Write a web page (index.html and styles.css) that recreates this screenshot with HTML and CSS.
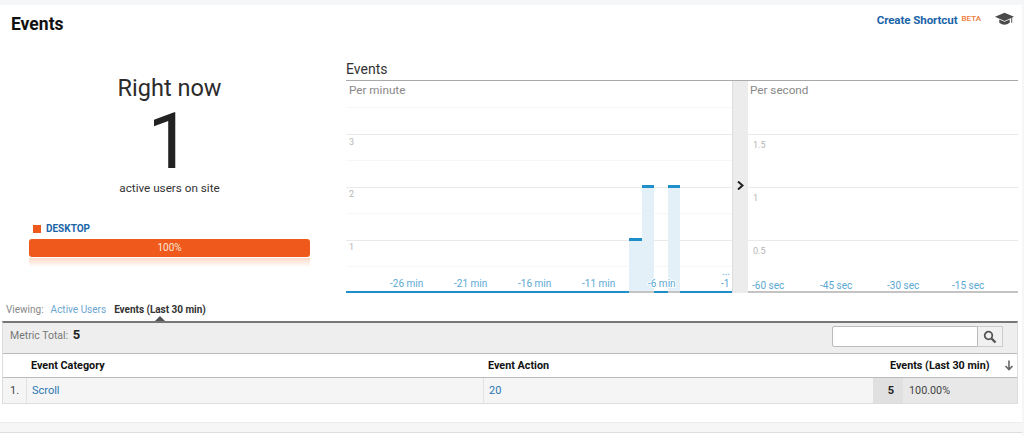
FILE: index.html
```html
<!DOCTYPE html>
<html>
<head>
    <meta charset="utf-8" />
    <title>Events - Real-Time</title>
    <link rel="stylesheet" href="styles.css">
</head>
<body>
<div class="page">
    <header class="head">
        <h1>Events</h1>
        <div class="shortcut">
            <a class="shortcut-link">Create Shortcut</a>
            <sup class="beta">BETA</sup>
            <svg class="cap" viewBox="0 0 20 14" width="19" height="14">
                <path d="M0 4.5 L10 0.5 L20 4.5 L10 9 Z" fill="#4a4a4a"/>
                <path d="M4.5 7.5 L10 10 L15.5 7.5 L15.5 11 Q10 15 4.5 11 Z" fill="#4a4a4a"/>
                <path d="M17.6 5.5 L17.6 11" stroke="#4a4a4a" stroke-width="1"/>
            </svg>
        </div>
    </header>

    <section class="overview">
        <div class="now">
            <div class="now-title">Right now</div>
            <div class="now-count">1</div>
            <div class="now-sub">active users on site</div>
            <div class="legend"><i class="legend-dot"></i>DESKTOP</div>
            <div class="bar">100%</div>
            <div class="bar-shine"></div>
        </div>
        <div class="charts">
            <h2>Events</h2>
            <div class="chart-row">
                <svg class="plot" width="386" height="212" viewBox="0 0 386 212">
                    <g class="grid-soft">
                        <path d="M0 26.5H386M0 79.5H386M0 132.5H386M0 185.5H386"/>
                    </g>
                    <g class="grid">
                        <path d="M0 53.5H386M0 106.5H386M0 159.5H386"/>
                    </g>
                    <text class="plot-title" x="3" y="13">Per minute</text>
                    <text class="tick-y" x="3" y="64">3</text>
                    <text class="tick-y" x="3" y="116">2</text>
                    <text class="tick-y" x="3" y="169">1</text>
                    <g class="col">
                        <rect x="283" y="158" width="13" height="52"/>
                        <rect x="296" y="105" width="12" height="105"/>
                        <rect x="322" y="105" width="12" height="105"/>
                    </g>
                    <g class="cap-line">
                        <rect x="283" y="157" width="13" height="3"/>
                        <rect x="296" y="104" width="12" height="3"/>
                        <rect x="322" y="104" width="12" height="3"/>
                    </g>
                    <rect class="axis" x="0" y="210" width="386" height="2"/>
                    <g class="cap-line">
                        <rect x="0" y="210" width="283" height="2"/>
                        <rect x="308" y="210" width="14" height="2"/>
                        <rect x="334" y="210" width="52" height="2"/>
                    </g>
                    <g class="tick-x">
                        <text x="44" y="206">-26 min</text>
                        <text x="108" y="206">-21 min</text>
                        <text x="172" y="206">-16 min</text>
                        <text x="236" y="206">-11 min</text>
                        <text x="302" y="206">-6 min</text>
                        <text x="375" y="206">-1</text>
                        <text x="376" y="194">...</text>
                    </g>
                </svg>
                <div class="divider">
                    <svg width="7" height="9" viewBox="0 0 7 9"><path d="M1 0.5 L5.5 4.5 L1 8.5" fill="none" stroke="#222" stroke-width="2"/></svg>
                </div>
                <svg class="plot" width="270" height="212" viewBox="0 0 270 212">
                    <g class="grid">
                        <path d="M0 53.5H270M0 106.5H270M0 159.5H270"/>
                    </g>
                    <text class="plot-title" x="2" y="13">Per second</text>
                    <text class="tick-y" x="5" y="67">1.5</text>
                    <text class="tick-y" x="5" y="120">1</text>
                    <text class="tick-y" x="5" y="173">0.5</text>
                    <rect class="axis" x="0" y="210" width="270" height="2"/>
                    <g class="tick-x">
                        <text x="4" y="208">-60 sec</text>
                        <text x="72" y="208">-45 sec</text>
                        <text x="139" y="208">-30 sec</text>
                        <text x="204" y="208">-15 sec</text>
                    </g>
                </svg>
            </div>
        </div>
    </section>

    <nav class="viewing">
        <span class="viewing-label">Viewing:</span>
        <a class="viewing-link">Active Users</a>
        <a class="viewing-current">Events (Last 30 min)</a>
    </nav>

    <section class="report">
        <div class="metric">
            <div class="metric-total">Metric Total: <b>5</b></div>
            <div class="search">
                <input class="search-input" type="text" />
                <button class="search-btn">
                    <svg width="14" height="14" viewBox="0 0 14 14"><circle cx="5.5" cy="5.5" r="3.8" fill="none" stroke="#555" stroke-width="1.8"/><path d="M8.5 8.5 L12.5 12.5" stroke="#555" stroke-width="2.4"/></svg>
                </button>
            </div>
        </div>
        <div class="row row-head">
            <div class="c-num"></div>
            <div class="c-cat">Event Category</div>
            <div class="c-act">Event Action</div>
            <div class="c-evt">Events (Last 30 min)
                <svg class="sort" width="10" height="11" viewBox="0 0 10 11"><path d="M5 0.5V9M1.5 6 L5 9.5 L8.5 6" fill="none" stroke="#666" stroke-width="1.6"/></svg>
            </div>
        </div>
        <div class="row row-data">
            <div class="c-num">1.</div>
            <div class="c-cat"><a>Scroll</a></div>
            <div class="c-act"><a>20</a></div>
            <div class="c-val">5</div>
            <div class="c-pct">100.00%</div>
        </div>
    </section>

    <div class="foot-strip"></div>
</div>
</body>
</html>
```

FILE: styles.css
```css
* {box-sizing: border-box;margin: 0;padding: 0;}
html, body {height: 100%;overflow: hidden;}
body {font-family: Roboto, "Liberation Sans", sans-serif;color: #222;background: #f5f6f8;}
a {color: #2a75b3;}

.page {width: 1022px;height: 436px;border-top: 5px solid #f5f6f8;background: #fff;}

.head {display: flex;justify-content: space-between;height: 38px;padding: 9px 8px 0 11px;}
h1 {font-size: 17.5px;line-height: 20px;font-weight: 700;color: #111;}
.shortcut {display: flex;align-items: flex-start;height: 20px;}
.shortcut-link {font-size: 11.6px;line-height: 15px;font-weight: 700;color: #1a64a8;letter-spacing: -0.1px;margin-top: -1px;}
.beta {font-size: 8px;line-height: 10px;color: #ee7a3a;font-weight: 500;margin: 0 0 0 4px;}
.cap {margin: -2px 0 0 14px;}

.overview {display: flex;height: 250px;}
.now {width: 346px;padding: 0 36px 0 29px;text-align: center;}
.now-title {font-size: 23.5px;line-height: 28px;margin-top: 31px;color: #2b2b2b;}
.now-count {font-size: 78px;line-height: 60px;font-weight: 400;margin-top: 10px;color: #222;}
.now-sub {font-size: 11.7px;line-height: 16px;margin-top: 8px;color: #333;}
.legend {display: flex;align-items: center;font-size: 10px;font-weight: 700;line-height: 12px;color: #1a64a8;margin: 27px 0 0 4px;}
.legend-dot {width: 8px;height: 8px;background: #ef5a1c;margin-right: 5px;}
.bar {height: 18px;margin-top: 4px;line-height: 18px;font-size: 10px;color: #fbe3d6;background: #ef5a1c;border-radius: 3px;}
.bar-shine {height: 9px;margin-top: 1px;background: linear-gradient(#fbd9c8, #fff);}

.charts {width: 672px;padding-top: 18px;}
h2 {font-size: 14px;line-height: 17px;font-weight: 400;color: #333;height: 20px;border-bottom: 1.5px solid #aaa;}
.chart-row {display: flex;}
.plot {display: block;}
.divider {width: 16px;height: 212px;background: #ececec;border-left: 1px solid #ddd;display: flex;justify-content: center;padding: 100px 1px 0 0;}

.grid path {stroke: #e9e9e9;fill: none;}
.grid-soft path {stroke: #f7f7f7;fill: none;}
.plot-title {font-size: 11.7px;fill: #888;}
.tick-y {font-size: 9px;fill: #b5b5b5;}
.tick-x {font-size: 10px;fill: #5aa8d4;stroke: #fff;stroke-width: 2px;paint-order: stroke;}
.col {fill: #e3f0f7;}
.cap-line {fill: #1e8fc8;}
.axis {fill: #c4c4c4;}

.viewing {display: flex;align-items: center;height: 15px;padding-left: 6px;margin-top: 9px;font-size: 10px;position: relative;}
.viewing-label {color: #888;}
.viewing-link {color: #6ba6d0;margin-left: 7px;}
.viewing-current {color: #333;font-weight: 700;margin-left: 8px;letter-spacing: -0.03px;}
.viewing-current::after {content: '';position: absolute;left: 155px;top: 14px;border: 5px solid transparent;border-top: 0;border-bottom-color: #555;}

.report {margin: 4px 4px 0 2px;border: 1px solid #ddd;border-top: 2px solid #777;}
.metric {display: flex;justify-content: space-between;height: 31px;background: #eee;border-bottom: 1px solid #bbb;padding: 3px 14px 0 7px;}
.metric-total {font-size: 10.5px;line-height: 16px;color: #777;padding-top: 1px;}
.metric-total b {font-size: 13px;color: #222;margin-left: 2px;}
.search {display: flex;height: 21px;}
.search-input {width: 146px;height: 21px;border: 1px solid #bbb;background: #fff;border-radius: 2px 0 0 2px;}
.search-btn {width: 25px;height: 21px;border: 1px solid #ccc;border-left: 0;background: #f1f1f1;display: flex;align-items: center;justify-content: center;}

.row {display: flex;font-size: 10.8px;}
.row-head {height: 24px;line-height: 23px;font-weight: 700;color: #111;background: #fff;border-bottom: 1px solid #bbb;}
.row-data {height: 25px;line-height: 26px;background: #f5f5f5;}
.c-num {width: 23px;padding-left: 7px;}
.c-cat {width: 457px;padding-left: 5px;}
.c-act {width: 390px;padding-left: 5px;}
.row-data .c-cat, .row-data .c-act {border-left: 1px solid #e2e2e2;}
.row-data a {font-size: 11px;}
.row-data .c-num {font-size: 11px;color: #444;}
.row-head .c-act {width: 407px;}
.c-evt {flex: 1;white-space: nowrap;font-weight: 700;}
.sort {margin-left: 12px;vertical-align: -2px;}
.c-val {width: 30px;background: #e0e0e0;text-align: right;padding-right: 9px;font-weight: 700;font-size: 11px;}
.c-pct {flex: 1;background: #e8e8e8;padding-left: 6px;font-size: 10.8px;color: #444;}

.foot-strip {height: 11px;margin-top: 18px;background: #f6f6f6;border-top: 1px solid #eee;border-bottom: 1px solid #ddd;}
```
